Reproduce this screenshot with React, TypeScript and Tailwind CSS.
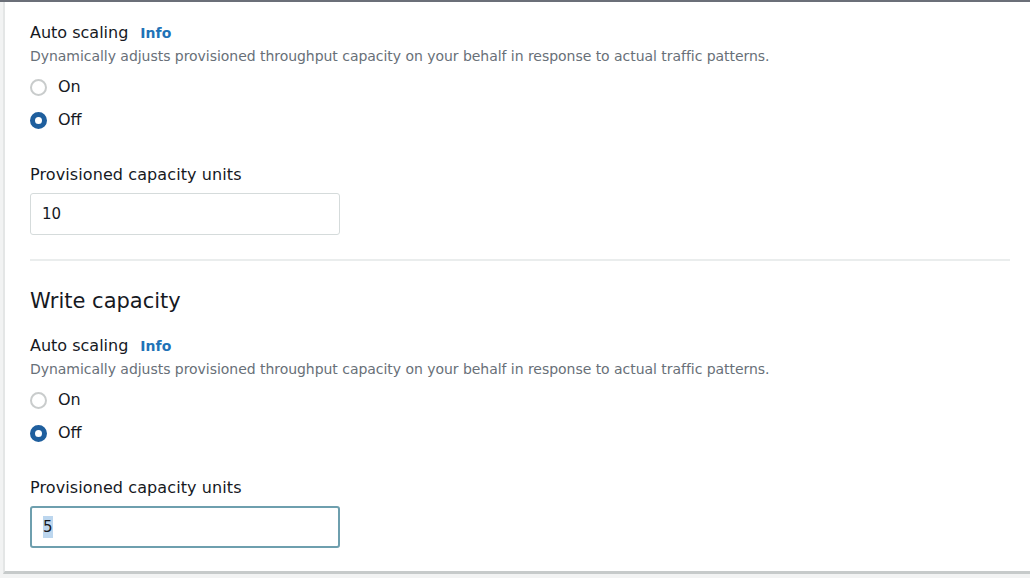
import React from 'react'

const font = { fontFamily: '"DejaVu Sans", "Open Sans", Arial, sans-serif' }

function Radio({ checked, label }: { checked?: boolean; label: string }) {
  return (
    <label className="flex items-center gap-[11px] h-[22px]">
      {checked ? (
        <span className="w-[17px] h-[17px] rounded-full border-[5px] border-[#1f5f9e] bg-white" />
      ) : (
        <span className="w-[17px] h-[17px] rounded-full border-2 border-[#c9cccc] bg-white" />
      )}
      <span className="text-[16px] text-[#16191f]">{label}</span>
    </label>
  )
}

function AutoScaling() {
  return (
    <div className="flex flex-col">
      <div className="flex items-baseline gap-[12px] h-[22px]">
        <span className="text-[16px] text-[#16191f]">Auto scaling</span>
        <span className="text-[14px] font-bold text-[#1f73b7]">Info</span>
      </div>
      <p className="text-[14px] text-[#687078] mt-[4px] leading-[18px] tracking-[-0.04px]">
        Dynamically adjusts provisioned throughput capacity on your behalf in response to actual traffic patterns.
      </p>
      <div className="flex flex-col gap-[11px] mt-[11px]">
        <Radio label="On" />
        <Radio checked label="Off" />
      </div>
    </div>
  )
}

function Units({ value, focused }: { value: string; focused?: boolean }) {
  return (
    <div className="flex flex-col mt-[32px]">
      <span className="text-[16px] text-[#16191f] h-[22px] tracking-[0.1px]">Provisioned capacity units</span>
      <div
        className={`mt-[8px] w-[310px] h-[42px] rounded-[3px] flex items-center px-[11px] bg-white ${
          focused ? 'border-2 border-[#6e9fae]' : 'border border-[#d5dbdb]'
        }`}
      >
        <span className={`text-[15px] text-[#16191f] ${focused ? 'bg-[#bcd6ee]' : ''}`}>{value}</span>
      </div>
    </div>
  )
}

export default function App() {
  return (
    <div className="w-[1030px] h-[578px] bg-[#f2f3f3] overflow-hidden" style={font}>
      <div className="h-[2px] bg-[#6b6f78]" />
      <div className="ml-[3px] h-[572px] bg-white border-l-2 border-[#e4e6e6] border-b-[3px] border-b-[#c6caca] flex flex-col pl-[25px] pr-[18px] pt-[19px]">
        <AutoScaling />
        <Units value="10" />
        <div className="h-[2px] bg-[#eaeded] mt-[24px] w-[980px]" />
        <h2 className="text-[21px] text-[#16191f] mt-[26px] leading-[28px]">Write capacity</h2>
        <div className="mt-[19px]">
          <AutoScaling />
        </div>
        <Units value="5" focused />
      </div>
    </div>
  )
}
